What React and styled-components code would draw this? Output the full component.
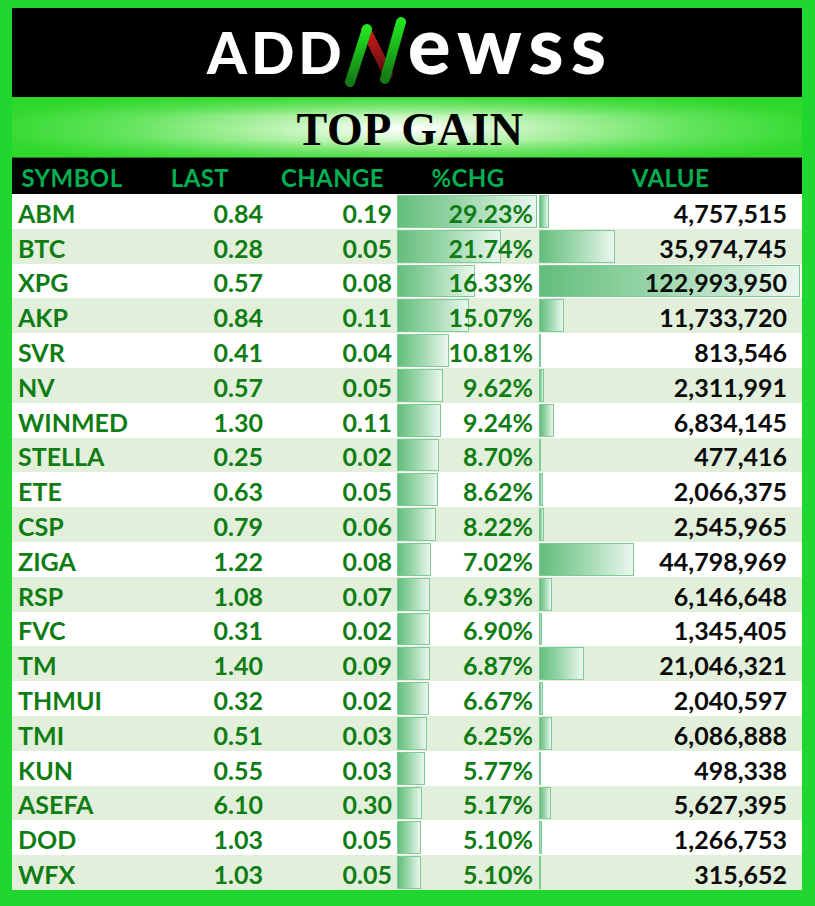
import React from "react";
import styled, { createGlobalStyle } from "styled-components";

const GlobalStyle = createGlobalStyle`
  html, body {
    margin: 0;
    padding: 0;
    background: #1fd72f;
  }
  * {
    box-sizing: border-box;
  }
`;

const rows = [
  ["ABM", "0.84", "0.19", 29.23, 4757515],
  ["BTC", "0.28", "0.05", 21.74, 35974745],
  ["XPG", "0.57", "0.08", 16.33, 122993950],
  ["AKP", "0.84", "0.11", 15.07, 11733720],
  ["SVR", "0.41", "0.04", 10.81, 813546],
  ["NV", "0.57", "0.05", 9.62, 2311991],
  ["WINMED", "1.30", "0.11", 9.24, 6834145],
  ["STELLA", "0.25", "0.02", 8.7, 477416],
  ["ETE", "0.63", "0.05", 8.62, 2066375],
  ["CSP", "0.79", "0.06", 8.22, 2545965],
  ["ZIGA", "1.22", "0.08", 7.02, 44798969],
  ["RSP", "1.08", "0.07", 6.93, 6146648],
  ["FVC", "0.31", "0.02", 6.9, 1345405],
  ["TM", "1.40", "0.09", 6.87, 21046321],
  ["THMUI", "0.32", "0.02", 6.67, 2040597],
  ["TMI", "0.51", "0.03", 6.25, 6086888],
  ["KUN", "0.55", "0.03", 5.77, 498338],
  ["ASEFA", "6.10", "0.30", 5.17, 5627395],
  ["DOD", "1.03", "0.05", 5.1, 1266753],
  ["WFX", "1.03", "0.05", 5.1, 315652],
];

const maxPct = Math.max(...rows.map((r) => r[3]));
const maxValue = Math.max(...rows.map((r) => r[4]));

const COLS = "120px 136px 129px 142px 263px";

const Frame = styled.div`
  width: 815px;
  height: 906px;
  padding: 8px 13px 16px 12px;
  background: #1fd72f;
  display: flex;
  flex-direction: column;
`;

const LogoBar = styled.div`
  height: 90px;
  flex: none;
  background: #000;
  display: flex;
  justify-content: center;
  align-items: flex-start;
  padding: 13px 0 0 6px;
  border-bottom: 1px solid #2bd62b;
`;

const Wordmark = styled.div`
  display: flex;
  align-items: baseline;
  line-height: 44px;
`;

const LogoText = styled.span`
  font-family: Lato, "Open Sans", sans-serif;
  font-weight: 900;
  color: #fff;
  font-size: ${(p) => p.size}px;
  letter-spacing: ${(p) => p.spacing}px;
  line-height: 44px;
`;

const LogoMark = styled.svg`
  align-self: flex-start;
  margin: -7px 2px 0 -2px;
  flex: none;
`;

const TitleBand = styled.div`
  height: 60px;
  flex: none;
  display: flex;
  align-items: center;
  justify-content: center;
  background:
    linear-gradient(
      to bottom,
      rgba(40, 210, 35, 0.55) 0%,
      rgba(40, 210, 35, 0) 30%,
      rgba(40, 210, 35, 0) 72%,
      rgba(40, 210, 35, 0.45) 100%
    ),
    radial-gradient(
      ellipse 52% 80% at 50% 52%,
      #ffffff 0%,
      #dcf9d6 18%,
      #a2ef98 42%,
      #62e45c 70%,
      #34da2f 100%
    );
  border-bottom: 1px solid #1d7a1d;
`;

const Title = styled.h1`
  margin: 4px 0 0 6px;
  font-family: "Liberation Serif", "Times New Roman", serif;
  font-weight: 700;
  font-size: 46px;
  letter-spacing: 0.5px;
  color: #000;
  line-height: 1;
`;

const HeaderRow = styled.div`
  display: grid;
  grid-template-columns: ${COLS};
  height: 36px;
  flex: none;
  background: #000;
  align-items: center;
`;

const HeaderCell = styled.div`
  font-family: Lato, "Open Sans", sans-serif;
  font-weight: 700;
  font-size: 24px;
  color: #00b050;
  text-align: center;
  padding-top: 3px;
  letter-spacing: 0.4px;
`;

const Body = styled.div`
  display: grid;
  grid-template-rows: repeat(20, 1fr);
  flex: 1;
`;

const Row = styled.div`
  display: grid;
  grid-template-columns: ${COLS};
  background: ${(p) => (p.$alt ? "#e2efda" : "#ffffff")};
`;

const Cell = styled.div`
  position: relative;
  display: flex;
  align-items: center;
  justify-content: ${(p) => (p.$left ? "flex-start" : "flex-end")};
  padding: 3px ${(p) => p.$pr || 5}px 0 ${(p) => (p.$left ? 6 : 0)}px;
  font-family: Lato, "Open Sans", sans-serif;
  font-weight: 700;
  font-size: 25px;
  color: ${(p) => (p.$dark ? "#0b0b0b" : "#0f7d14")};
  white-space: nowrap;
`;

const DataBar = styled.div`
  position: absolute;
  left: 0;
  top: 1px;
  bottom: 1px;
  border: 1px solid #7fcb95;
  background: linear-gradient(to right, #63be7b 0%, #9ad6aa 45%, #eaf6ee 100%);
`;

const CellText = styled.span`
  position: relative;
`;

function Bar({ ratio }) {
  return <DataBar style={{ width: `calc((100% - 2px) * ${ratio})` }} />;
}

function Logo() {
  return (
    <LogoBar>
      <Wordmark>
        <LogoText size={57} spacing={4}>
          ADD
        </LogoText>
        <LogoMark width="62" height="76" viewBox="0 0 62 76" aria-label="N">
          <defs>
            <linearGradient id="gUp" x1="0" y1="1" x2="0" y2="0">
              <stop offset="0" stopColor="#137a16" />
              <stop offset="1" stopColor="#22e51f" />
            </linearGradient>
            <linearGradient id="rDown" x1="0" y1="0" x2="0" y2="1">
              <stop offset="0" stopColor="#d21c1c" />
              <stop offset="1" stopColor="#5a0e0e" />
            </linearGradient>
          </defs>
          <line x1="22" y1="16" x2="44" y2="60" stroke="url(#rDown)" strokeWidth="10" strokeLinecap="round" />
          <line x1="6" y1="68" x2="23" y2="15" stroke="url(#gUp)" strokeWidth="10" strokeLinecap="round" />
          <line x1="41" y1="65" x2="57" y2="8" stroke="url(#gUp)" strokeWidth="10" strokeLinecap="round" />
        </LogoMark>
        <LogoText size={80} spacing={7}>
          ewss
        </LogoText>
      </Wordmark>
    </LogoBar>
  );
}

export default function App() {
  return (
    <>
      <GlobalStyle />
      <Frame>
        <Logo />
        <TitleBand>
          <Title>TOP GAIN</Title>
        </TitleBand>
        <HeaderRow>
          <HeaderCell>SYMBOL</HeaderCell>
          <HeaderCell>LAST</HeaderCell>
          <HeaderCell>CHANGE</HeaderCell>
          <HeaderCell>%CHG</HeaderCell>
          <HeaderCell>VALUE</HeaderCell>
        </HeaderRow>
        <Body>
          {rows.map(([sym, last, chg, pct, value], i) => (
            <Row key={sym + i} $alt={i % 2 === 1}>
              <Cell $left>{sym}</Cell>
              <Cell>{last}</Cell>
              <Cell>{chg}</Cell>
              <Cell $pr={6}>
                <Bar ratio={pct / maxPct} />
                <CellText>{pct.toFixed(2)}%</CellText>
              </Cell>
              <Cell $pr={15} $dark>
                <Bar ratio={value / maxValue} />
                <CellText>{value.toLocaleString("en-US")}</CellText>
              </Cell>
            </Row>
          ))}
        </Body>
      </Frame>
    </>
  );
}
